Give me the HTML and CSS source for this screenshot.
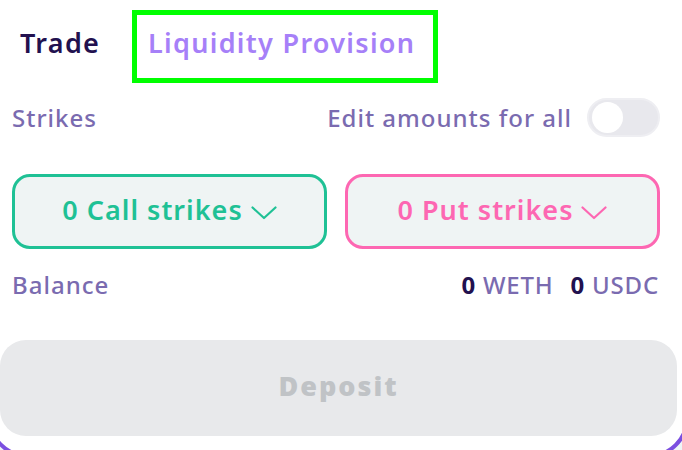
FILE: index.html
```html
<!DOCTYPE html>
<html lang="en">
<head>
<meta charset="utf-8">
<title>Liquidity Provision</title>
<link rel="stylesheet" href="styles.css">
</head>
<body>
<div class="card">
  <div class="content">
    <div class="tabs">
      <div class="tab tab-trade">Trade</div>
      <div class="tab tab-lp">Liquidity Provision</div>
    </div>
    <div class="row row-strikes">
      <span class="label">Strikes</span>
      <div class="edit-all">
        <span class="label">Edit amounts for all</span>
        <span class="toggle"><span class="knob"></span></span>
      </div>
    </div>
    <div class="strike-buttons">
      <button class="strike strike-call">0 Call strikes
        <svg class="chev" viewBox="0 0 26 14" width="26" height="14"><path d="M1.5 1.5 L13 12 L24.5 1.5" fill="none" stroke="currentColor" stroke-width="2.2" stroke-linecap="round" stroke-linejoin="round"/></svg>
      </button>
      <button class="strike strike-put">0 Put strikes
        <svg class="chev" viewBox="0 0 26 14" width="26" height="14"><path d="M1.5 1.5 L13 12 L24.5 1.5" fill="none" stroke="currentColor" stroke-width="2.2" stroke-linecap="round" stroke-linejoin="round"/></svg>
      </button>
    </div>
    <div class="row row-balance">
      <span class="label">Balance</span>
      <div class="balances">
        <span class="bal"><b>0</b>WETH</span>
        <span class="bal"><b>0</b>USDC</span>
      </div>
    </div>
  </div>
  <div class="footer">
    <button class="deposit" disabled>Deposit</button>
  </div>
</div>
</body>
</html>
```
FILE: styles.css
```css
html, body {
  margin: 0;
  padding: 0;
}
body {
  width: 682px;
  height: 450px;
  overflow: hidden;
  background: #eef6f6;
  font-family: "Noto Sans", sans-serif;
}
.card {
  box-sizing: border-box;
  width: 701px;
  height: 498px;
  margin: -40px 0 0 -12px;
  background: #ffffff;
  border: 4px solid #7b4fe0;
  border-radius: 40px;
  padding-top: 46px;
}
.content {
  padding: 0 25px 0 20px;
}
.tabs {
  display: flex;
  align-items: center;
  height: 73px;
}
.tab {
  box-sizing: border-box;
  font-size: 27px;
  font-weight: 600;
  height: 73px;
  display: flex;
  align-items: center;
  letter-spacing: 1.3px;
}
.tab-trade {
  width: 120px;
  padding: 0 0 8px 8px;
  color: #22114f;
}
.tab-lp {
  width: 306px;
  padding: 0 0 9px 11px;
  color: #a680f8;
  border: 5px solid #00ff00;
}
.row {
  display: flex;
  justify-content: space-between;
  align-items: center;
}
.label {
  font-size: 24px;
  font-weight: 500;
  color: #7a6bb0;
  letter-spacing: 1px;
}
.row-strikes {
  height: 40px;
  margin-top: 14px;
}
.edit-all {
  display: flex;
  align-items: center;
  gap: 15px;
}
.toggle {
  box-sizing: border-box;
  width: 73px;
  height: 39px;
  border-radius: 20px;
  background: #e8e8ed;
  border: 2px solid #eeeef2;
  display: flex;
  align-items: center;
  padding-left: 3px;
}
.knob {
  width: 31px;
  height: 31px;
  border-radius: 50%;
  background: #ffffff;
}
.strike-buttons {
  display: grid;
  grid-template-columns: 1fr 1fr;
  gap: 18px;
  margin-top: 37px;
  width: 648px;
}
.strike {
  box-sizing: border-box;
  height: 75px;
  border-radius: 18px;
  background: #eff4f4;
  font-family: "Noto Sans", sans-serif;
  font-size: 27px;
  font-weight: 600;
  letter-spacing: 1px;
  display: flex;
  align-items: center;
  justify-content: center;
  gap: 8px;
  padding: 0 0 4px 0;
}
.strike-call {
  border: 3px solid #1fc195;
  color: #1fc195;
}
.strike-put {
  border: 3px solid #fd67b2;
  color: #fd67b2;
}
.chev {
  margin-top: 6px;
}
.row-balance {
  height: 24px;
  margin-top: 23px;
}
.balances {
  display: flex;
  gap: 17px;
  padding-right: 1px;
}
.bal {
  font-size: 24px;
  font-weight: 500;
  color: #7a6bb0;
  letter-spacing: 0.8px;
}
.bal b {
  color: #22114f;
  font-weight: 700;
  margin-right: 7px;
}
.footer {
  padding: 0 8px;
  margin-top: 44px;
}
.deposit {
  display: block;
  width: 100%;
  height: 96px;
  border: none;
  border-radius: 26px;
  background: #e8e9eb;
  color: #c0c3c6;
  font-family: "Open Sans", sans-serif;
  font-size: 27px;
  font-weight: 800;
  letter-spacing: 2px;
  padding: 0 0 6px 0;
}
```
